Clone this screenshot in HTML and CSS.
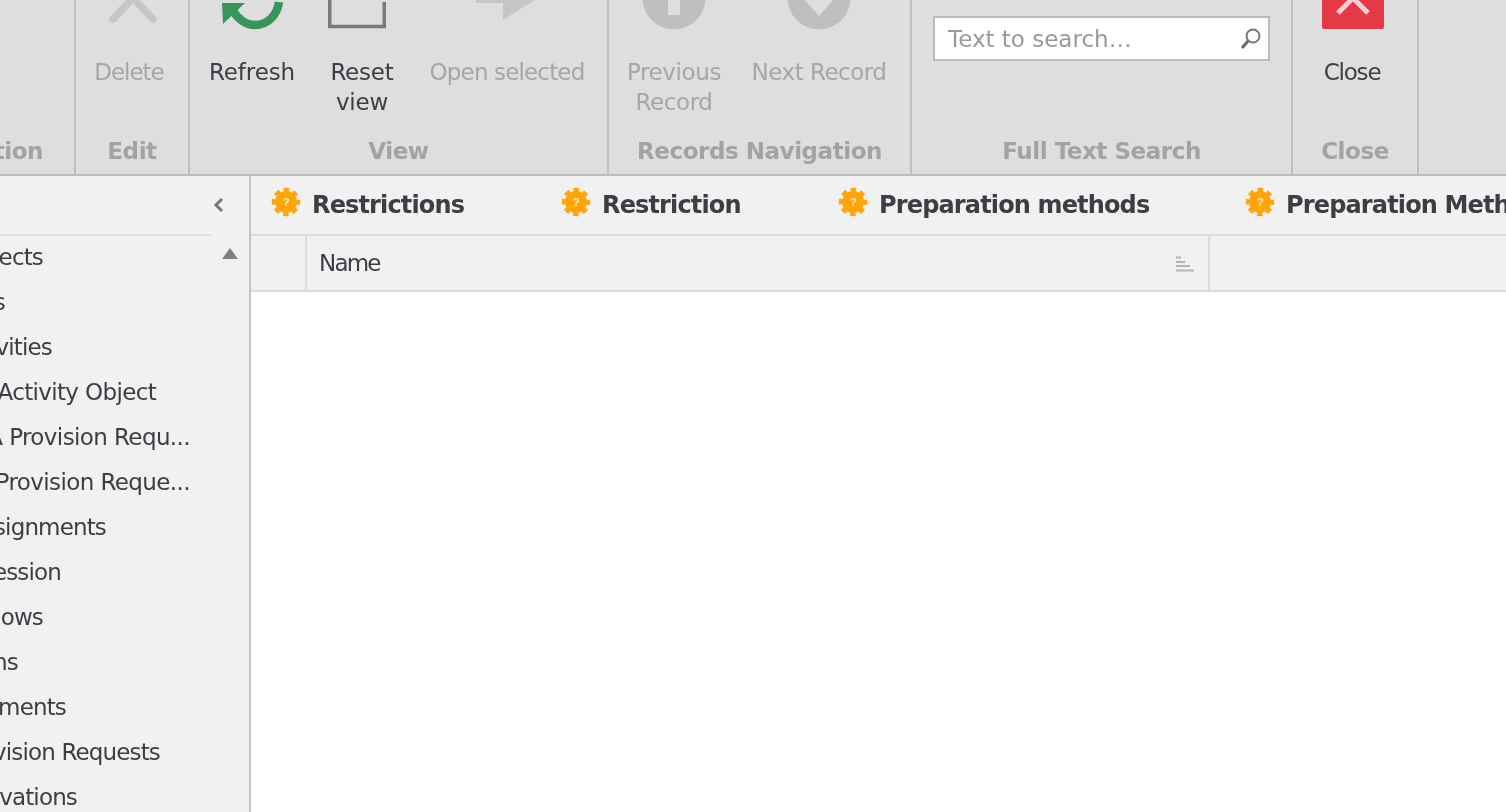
FILE: index.html
```html
<!DOCTYPE html>
<html lang="en">
<head>
  <meta charset="UTF-8" />
  <title>Restrictions</title>
  <link rel="stylesheet" href="styles.css">
</head>
<body>

<!-- Ribbon -->
<header class="ribbon">
  <section class="group group-action">
    <div class="group-btns"></div>
    <div class="group-label label-clip">Action</div>
  </section>

  <section class="group group-edit">
    <div class="group-btns">
      <div class="btn btn-delete off">
        <svg class="icon" width="66" height="30" viewBox="0 0 66 30">
          <path d="M17 19 L37 -2 L57 19" fill="none" stroke="#c6c6c6" stroke-width="7.5" stroke-linecap="round" stroke-linejoin="round"/>
        </svg>
        <span>Delete</span>
      </div>
    </div>
    <div class="group-label">Edit</div>
  </section>

  <section class="group group-view">
    <div class="group-btns">
      <div class="btn btn-refresh">
        <svg class="icon" width="70" height="30" viewBox="0 0 70 30">
          <path d="M62 2 C 60 16 50 25 38 25 C 29 25 22 20 16 11" fill="none" stroke="#38965c" stroke-width="8.5"/>
          <path d="M5 3 H28 L6 24 Z" fill="#38965c"/>
        </svg>
        <span>Refresh</span>
      </div>
      <div class="btn btn-reset">
        <svg class="icon" width="68" height="30" viewBox="0 0 68 30">
          <path d="M1.75 -4 V26.5 H56.25 V2" fill="none" stroke="#7a7a7a" stroke-width="3.5"/>
        </svg>
        <span>Reset<br>view</span>
      </div>
      <div class="btn btn-open off">
        <svg class="icon" width="70" height="30" viewBox="0 0 70 30">
          <path d="M4 -2 H31 V-12 H82 L31 20 V3 H4 Z" fill="#c6c6c6"/>
        </svg>
        <span>Open selected</span>
      </div>
    </div>
    <div class="group-label">View</div>
  </section>

  <section class="group group-nav">
    <div class="group-btns">
      <div class="btn btn-prev off">
        <svg class="icon" width="66" height="30" viewBox="0 0 66 30">
          <circle cx="33" cy="-2" r="31.5" fill="#bfbfbf"/>
          <rect x="27" y="-2" width="12" height="17" fill="#dedede"/>
        </svg>
        <span>Previous<br>Record</span>
      </div>
      <div class="btn btn-next off">
        <svg class="icon" width="66" height="30" viewBox="0 0 66 30">
          <circle cx="33" cy="-2" r="31.5" fill="#bfbfbf"/>
          <path d="M17 -2 H49 L33 16 Z" fill="#dedede"/>
        </svg>
        <span>Next Record</span>
      </div>
    </div>
    <div class="group-label">Records Navigation</div>
  </section>

  <section class="group group-search">
    <div class="group-btns">
      <div class="search-box">
        <span class="search-text">Text to search…</span>
        <svg width="22" height="24" viewBox="0 0 22 24">
          <circle cx="13" cy="9" r="6.5" fill="none" stroke="#777" stroke-width="2"/>
          <path d="M8 14 L2 21" stroke="#666" stroke-width="3"/>
        </svg>
      </div>
    </div>
    <div class="group-label">Full Text Search</div>
  </section>

  <section class="group group-close">
    <div class="group-btns">
      <div class="btn btn-close">
        <svg class="icon" width="64" height="30" viewBox="0 0 64 30">
          <path d="M2 -2 H64 V27 Q64 29 62 29 H4 Q2 29 2 27 Z" fill="#e63946"/>
          <path d="M18 13 L33 -2 L48 13" fill="none" stroke="#f3d0d3" stroke-width="5"/>
        </svg>
        <span>Close</span>
      </div>
    </div>
    <div class="group-label">Close</div>
  </section>
</header>

<div class="main">
  <!-- Side navigation, scrolled sideways -->
  <aside class="side">
    <div class="side-head">
      <svg width="12" height="16" viewBox="0 0 12 16">
        <path d="M9 2 L3 8 L9 14" fill="none" stroke="#777" stroke-width="3"/>
      </svg>
    </div>
    <svg class="side-arrow" width="16" height="11" viewBox="0 0 16 11">
      <path d="M8 0 L16 11 H0 Z" fill="#808080"/>
    </svg>
    <ul class="side-list">
      <li>Objects</li>
      <li>Items</li>
      <li>Activities</li>
      <li>Activity Object</li>
      <li>A Provision Requ...</li>
      <li>Provision Reque...</li>
      <li>Assignments</li>
      <li>Session</li>
      <li>Flows</li>
      <li>Items</li>
      <li>Comments</li>
      <li>Provision Requests</li>
      <li>Derivations</li>
    </ul>
  </aside>

  <div class="content">
    <nav class="tabs">
      <a class="tab tab-1"><svg class="gear" width="30" height="30" viewBox="0 0 30 30"><use href="#gear"/></svg><span>Restrictions</span></a>
      <a class="tab tab-2"><svg class="gear" width="30" height="30" viewBox="0 0 30 30"><use href="#gear"/></svg><span>Restriction</span></a>
      <a class="tab tab-3"><svg class="gear" width="30" height="30" viewBox="0 0 30 30"><use href="#gear"/></svg><span>Preparation methods</span></a>
      <a class="tab tab-4"><svg class="gear" width="30" height="30" viewBox="0 0 30 30"><use href="#gear"/></svg><span>Preparation Methods</span></a>
    </nav>

    <div class="grid-head">
      <div class="cell-check"></div>
      <div class="cell-name">
        <span>Name</span>
        <svg class="sort" width="18" height="16" viewBox="0 0 18 16">
          <path d="M0 1.5 H5 M0 6 H9 M0 10 H14 M0 14.5 H18" stroke="#b4b4b4" stroke-width="2"/>
        </svg>
      </div>
    </div>
    <div class="grid-body"></div>
  </div>
</div>

<svg class="defs" width="0" height="0">
  <symbol id="gear" viewBox="0 0 30 30">
    <circle cx="15" cy="15" r="11" fill="#ffa50a"/>
    <circle cx="15" cy="15" r="12" fill="none" stroke="#ffa50a" stroke-width="4.5" stroke-dasharray="5.4 4.02" stroke-dashoffset="2.7"/>
    <text x="15" y="19" text-anchor="middle" font-size="11" font-weight="bold" font-family="'Liberation Sans', sans-serif" fill="#ffeccb">?</text>
  </symbol>
</svg>

</body>
</html>
```
FILE: styles.css
```css
html, body {
  margin: 0;
  padding: 0;
  height: 100%;
  overflow: hidden;
}
body {
  font-family: 'DejaVu Sans', sans-serif;
  font-size: 23px;
  letter-spacing: -0.6px;
  color: #3d3d45;
  background: white;
}

/* the whole window is a little soft, the capture was scaled up */
.ribbon, .main {
  filter: blur(0.45px);
}

/* ribbon */
.ribbon {
  display: flex;
  height: 174px;
  background: #dedede;
  border-bottom: 2px solid #bdbdbd;
}
.group {
  display: flex;
  flex-direction: column;
  box-sizing: border-box;
  border-right: 2px solid #bfbfbf;
  overflow: hidden;
}
.group-action { width: 76px; }
.group-edit { width: 114px; }
.group-view { width: 419px; }
.group-nav { width: 303px; }
.group-search { width: 381px; }
.group-close { width: 126px; }
.group-btns {
  display: flex;
  flex: 1;
}
.group-label {
  height: 46px;
  line-height: 46px;
  text-align: center;
  font-weight: bold;
  letter-spacing: -0.45px;
  color: #a3a3a3;
  white-space: nowrap;
}
.label-clip {
  display: flex;
  justify-content: flex-end;
  padding-right: 31px;
}

.btn {
  display: flex;
  flex-direction: column;
  align-items: center;
  text-align: center;
  line-height: 30px;
  white-space: nowrap;
}
.btn .icon {
  display: block;
  margin-bottom: 27px;
}
.off { color: #a6a6a6; }
.btn-delete { width: 112px; margin-left: -3px; letter-spacing: -1px; }
.btn-refresh { width: 124px; letter-spacing: -0.1px; }
.btn-reset { width: 96px; letter-spacing: -0.2px; }
.btn-open { width: 194px; letter-spacing: -0.85px; }
.btn-prev { width: 130px; letter-spacing: -0.4px; }
.btn-next { width: 160px; letter-spacing: -0.5px; }
.btn-close { width: 118px; letter-spacing: -1.2px; }

/* search */
.search-box {
  display: flex;
  align-items: center;
  justify-content: space-between;
  box-sizing: border-box;
  width: 337px;
  height: 45px;
  margin: 16px 0 0 21px;
  padding: 0 6px 0 13px;
  background: white;
  border: 2px solid #bbb;
}
.search-text {
  color: #999;
  letter-spacing: 0;
}

/* main area */
.main {
  display: flex;
  height: 636px;
}
.side {
  position: relative;
  width: 251px;
  flex: none;
  box-sizing: border-box;
  background: #f1f1f1;
  border-right: 2px solid #c4c4c4;
  overflow: hidden;
}
.side-head {
  box-sizing: border-box;
  width: 211px;
  height: 60px;
  border-bottom: 2px solid #e2e2e2;
}
.side-head svg {
  position: absolute;
  left: 213px;
  top: 21px;
}
.side-arrow {
  position: absolute;
  left: 222px;
  top: 72px;
}
.side-list {
  list-style: none;
  margin: 0;
  padding: 0;
  letter-spacing: -0.85px;
}
.side-list li {
  display: flex;
  justify-content: flex-end;
  height: 45px;
  line-height: 42px;
  white-space: nowrap;
}
.side-list li:nth-child(1) { width: 43px; }
.side-list li:nth-child(2) { width: 5px; }
.side-list li:nth-child(3) { width: 52px; }
.side-list li:nth-child(4) { width: 156px; letter-spacing: -0.65px; }
.side-list li:nth-child(5) { width: 190px; letter-spacing: -0.6px; }
.side-list li:nth-child(6) { width: 190px; letter-spacing: -0.6px; }
.side-list li:nth-child(7) { width: 106px; }
.side-list li:nth-child(8) { width: 61px; }
.side-list li:nth-child(9) { width: 43px; }
.side-list li:nth-child(10) { width: 18px; }
.side-list li:nth-child(11) { width: 66px; }
.side-list li:nth-child(12) { width: 160px; }
.side-list li:nth-child(13) { width: 77px; }

.content {
  flex: 1;
  min-width: 0;
  display: flex;
  flex-direction: column;
}
.tabs {
  display: flex;
  height: 58px;
  flex: none;
  background: #f1f1f1;
  border-bottom: 2px solid #dcdcdc;
  font-weight: bold;
  font-size: 24px;
  letter-spacing: -0.85px;
  white-space: nowrap;
  overflow: hidden;
}
.tab {
  display: flex;
  align-items: center;
  gap: 11px;
  flex: none;
  box-sizing: border-box;
  padding-left: 20px;
}
.gear {
  flex: none;
  margin-top: -6px;
}
.tab span { margin-top: -1px; }
.tab-1 { width: 290px; }
.tab-2 { width: 277px; }
.tab-3 { width: 407px; }

.grid-head {
  display: flex;
  height: 54px;
  flex: none;
  background: #f1f1f1;
  border-bottom: 2px solid #dcdcdc;
  letter-spacing: -1.8px;
}
.cell-check {
  width: 56px;
  box-sizing: border-box;
  border-right: 2px solid #dcdcdc;
}
.cell-name {
  display: flex;
  align-items: center;
  justify-content: space-between;
  width: 903px;
  box-sizing: border-box;
  padding: 0 14px 0 12px;
  border-right: 2px solid #dcdcdc;
}
.sort { margin-top: 2px; }
.grid-body {
  flex: 1;
  background: white;
}
.defs { position: absolute; }
```
